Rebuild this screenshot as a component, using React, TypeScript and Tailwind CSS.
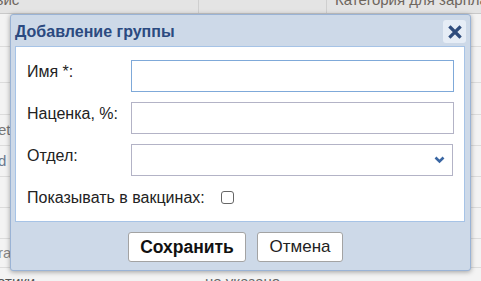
import React from "react";

const rows: { h: number; a: string; b: string; ac?: string }[] = [
  { h: 33, a: "", b: "" },
  { h: 36, a: "", b: "" },
  { h: 32, a: "", b: "" },
  { h: 31, a: "et", b: "", ac: "text-[#777]" },
  { h: 31, a: "d", b: "", ac: "text-[#6b7a90]" },
  { h: 31, a: "", b: "" },
  { h: 31, a: "", b: "" },
  { h: 29, a: "ra", b: "", ac: "text-[#888]" },
  { h: 30, a: "отики", b: "не указано", ac: "text-[#555]" },
];

export default function App() {
  const font = { fontFamily: '"Liberation Sans", Arial, sans-serif' };
  return (
    <div className="relative w-[481px] h-[281px] overflow-hidden bg-[#f1f1f1]" style={font}>
      {/* background table */}
      <div className="mt-[-24px] flex flex-col">
        <div className="flex h-[38px] bg-[#e4e4e4] border-b border-[#c9c9c9] text-[15px] text-[#6e665e]">
          <div className="w-[199px] shrink-0 border-r border-[#cfcfcf] overflow-hidden">
            <div className="pt-[15px] leading-[17px] -ml-[32px] whitespace-nowrap">Сервис</div>
          </div>
          <div className="w-[128px] shrink-0 border-r border-[#cfcfcf]"></div>
          <div className="flex-1 min-w-0 overflow-hidden pt-[15px] pl-[8px] leading-[17px] whitespace-nowrap">Категория для зарплаты</div>
        </div>
        {rows.map((r, i) => (
          <div
            key={i}
            className="flex border-b border-[#dcdcdc] text-[15px] text-[#666] bg-[#f3f3f3]"
            style={{ height: r.h }}
          >
            <div className={`w-[199px] shrink-0 flex items-center whitespace-nowrap ${r.ac ?? ""} ${r.a.length < 3 ? "-ml-[2px]" : "-ml-[3px]"}`}>
              {r.a}
            </div>
            <div className="w-[128px] shrink-0 flex items-center pl-[9px] whitespace-nowrap">{r.b}</div>
            <div className="flex-1 min-w-0"></div>
          </div>
        ))}
      </div>

      {/* dialog */}
      <div className="absolute left-[10px] top-[14px] w-[461px] h-[257px] border border-[#9ab3d5] bg-[#cdd9e8] rounded-[3px] shadow-[0_1px_5px_rgba(0,0,0,0.35)] flex flex-col">
        <div className="h-[31px] flex items-center justify-between pl-[4px] pr-[4px]">
          <div className="text-[16px] font-bold text-[#2b4a80] leading-[20px] pt-[2px]">Добавление группы</div>
          <div className="w-[23px] h-[23px] rounded-[3px] bg-[#e6edf6] flex items-center justify-center mt-[2px]">
            <svg width="14" height="14" viewBox="0 0 14 14">
              <path d="M2.5 2.5 L11.5 11.5 M11.5 2.5 L2.5 11.5" stroke="#2f4c7c" strokeWidth="3.2" strokeLinecap="square" />
            </svg>
          </div>
        </div>
        <div className="ml-[4px] mr-[5px] h-[176px] bg-white border border-[#a6c3e6] pt-[13px] pl-[11px] flex flex-col text-[16px] text-[#222]">
          <div className="flex h-[32px]">
            <div className="w-[104px] pt-[3px] leading-[18px]">Имя *:</div>
            <div className="w-[323px] h-[32px] border border-[#7fa9d9] bg-white"></div>
          </div>
          <div className="flex h-[32px] mt-[10px]">
            <div className="w-[104px] pt-[3px] leading-[18px]">Наценка, %:</div>
            <div className="w-[323px] h-[32px] border border-[#b3b3c6] bg-white"></div>
          </div>
          <div className="flex h-[32px] mt-[10px]">
            <div className="w-[104px] pt-[3px] leading-[18px]">Отдел:</div>
            <div className="w-[322px] h-[32px] border border-[#b3b3c6] bg-white flex items-center justify-end pr-[7px]">
              <svg width="11" height="8" viewBox="0 0 11 8">
                <path d="M1.5 1.5 L5.5 5.5 L9.5 1.5" stroke="#3a66a3" strokeWidth="2.6" fill="none" />
              </svg>
            </div>
          </div>
          <div className="flex items-center mt-[15px] h-[13px]">
            <div className="leading-[18px]">Показывать в вакцинах:</div>
            <div className="ml-[16px] w-[13px] h-[13px] border border-[#666] rounded-[3px] bg-white"></div>
          </div>
        </div>
        <div className="flex justify-center gap-[11px] mt-[10px] pr-[10px]">
          <button className="h-[30px] w-[118px] bg-white border border-[#a3a3a3] rounded-[3px] text-[17.5px] font-bold text-[#111] flex items-center justify-center">
            Сохранить
          </button>
          <button className="h-[30px] w-[86px] bg-white border border-[#a3a3a3] rounded-[3px] text-[17px] text-[#222] flex items-center justify-center">
            Отмена
          </button>
        </div>
      </div>
    </div>
  );
}
